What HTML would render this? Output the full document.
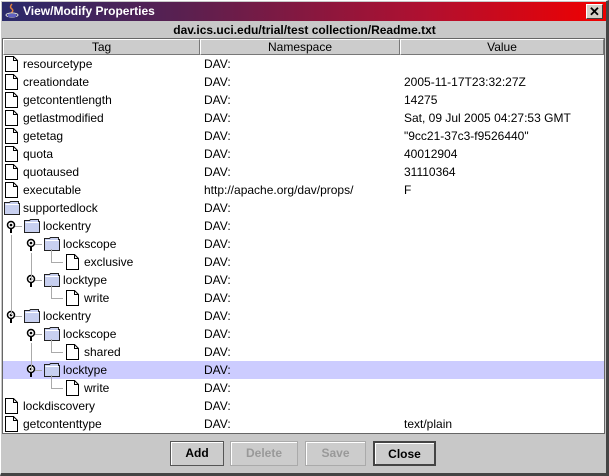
<!DOCTYPE html>
<html><head><style>
*{margin:0;padding:0;box-sizing:border-box}
body{width:609px;height:476px;background:#c8c8c8;position:relative;overflow:hidden;font-family:"Liberation Sans",sans-serif;font-size:12px;color:#000}
.a{position:absolute}
.t{position:absolute;white-space:nowrap;line-height:18px}
.btn{position:absolute;top:441px;height:25px;border:1px solid #555;background:#cccccc;font-weight:bold;font-size:12px;text-align:center;line-height:22px;box-shadow:inset 1px 1px 0 #fff}
.dis{color:#999;border-color:#aaa}
</style></head><body>
<div class="a" style="left:0;top:0;width:609px;height:476px;border-right:3px solid #444;border-bottom:3px solid #444;border-left:1px solid #fff;border-top:1px solid #fff"></div>
<div class="a" style="left:2px;top:2px;width:604px;height:19px;background:linear-gradient(90deg,#2a2a6a 0%,#5a2050 30%,#b01030 70%,#f00000 100%)"></div>
<svg class="a" style="left:5px;top:3px" width="14" height="16"><path d="M7 1 Q4 4 7 6 Q9 8 6 10" stroke="#e08040" fill="none" stroke-width="1.5"/><ellipse cx="7" cy="12" rx="6" ry="2" fill="none" stroke="#ddd"/><rect x="3" y="11" width="8" height="3" fill="#6060c0"/></svg>
<div class="t" style="left:23px;top:2px;color:#fff;font-weight:bold;font-size:12px;line-height:19px">View/Modify Properties</div>
<div class="a" style="left:586px;top:4px;width:17px;height:15px;background:#d4d0c8;border:1px solid #fff;border-right-color:#404040;border-bottom-color:#404040;text-align:center;font-size:13px;font-weight:bold;line-height:13px">✕</div>
<div class="t" style="left:0;width:609px;top:21px;text-align:center;font-weight:bold;font-size:12px;line-height:18px">dav.ics.uci.edu/trial/test collection/Readme.txt</div>
<div class="a" style="left:2px;top:38px;width:603px;height:396px;background:#fff;border:1px solid #666"></div>
<div class="a" style="left:3px;top:39px;width:197px;height:16px;background:#cccccc;border:1px solid #fff;border-right-color:#777;border-bottom-color:#777;text-align:center;line-height:14px">Tag</div>
<div class="a" style="left:200px;top:39px;width:200px;height:16px;background:#cccccc;border:1px solid #fff;border-right-color:#777;border-bottom-color:#777;text-align:center;line-height:14px">Namespace</div>
<div class="a" style="left:400px;top:39px;width:204px;height:16px;background:#cccccc;border:1px solid #fff;border-right-color:#777;border-bottom-color:#777;text-align:center;line-height:14px">Value</div>
<div class="a" style="left:3px;top:361px;width:601px;height:18px;background:#ccccff"></div>
<svg class="a" style="left:0;top:0" width="609" height="476" id="ic"></svg>
<div id="rows"></div>
<div class="btn" style="left:170px;width:54px">Add</div>
<div class="btn dis" style="left:230px;width:68px">Delete</div>
<div class="btn dis" style="left:305px;width:61px">Save</div>
<div class="btn" style="left:373px;width:63px;border:2px solid #444">Close</div>
<script>
var R=[["resourcetype",0,"f","DAV:",""],["creationdate",0,"f","DAV:","2005-11-17T23:32:27Z"],["getcontentlength",0,"f","DAV:","14275"],["getlastmodified",0,"f","DAV:","Sat, 09 Jul 2005 04:27:53 GMT"],["getetag",0,"f","DAV:","\"9cc21-37c3-f9526440\""],["quota",0,"f","DAV:","40012904"],["quotaused",0,"f","DAV:","31110364"],["executable",0,"f","http://apache.org/dav/props/","F"],["supportedlock",0,"d","DAV:",""],["lockentry",1,"d","DAV:",""],["lockscope",2,"d","DAV:",""],["exclusive",3,"f","DAV:",""],["locktype",2,"d","DAV:",""],["write",3,"f","DAV:",""],["lockentry",1,"d","DAV:",""],["lockscope",2,"d","DAV:",""],["shared",3,"f","DAV:",""],["locktype",2,"d","DAV:",""],["write",3,"f","DAV:",""],["lockdiscovery",0,"f","DAV:",""],["getcontenttype",0,"f","DAV:","text/plain"]];
var h="",s="";
var ix=[4,24,44,65];
R.forEach(function(r,i){var y=55+18*i,l=r[1],x=ix[l];
h+='<div class="t" style="left:'+(x+19)+'px;top:'+y+'px">'+r[0]+'</div><div class="t" style="left:204px;top:'+y+'px">'+r[3]+'</div><div class="t" style="left:404px;top:'+y+'px">'+r[4]+'</div>';
if(r[2]=="f"){s+='<path d="M'+(x+1.5)+' '+(y+1.5)+'h8l4 4v11h-12z" fill="#fff" stroke="#000"/><path d="M'+(x+9.5)+' '+(y+1.5)+'v4h4" fill="none" stroke="#000"/>';}
else{s+='<path d="M'+(x+0.5)+' '+(y+3.5)+'h5l1 -1h8v2h1v11h-15z" fill="#c8d0f0" stroke="#222"/><path d="M'+(x+1.5)+' '+(y+5.5)+'h13" stroke="#fff"/>';}
if(l==1||l==2){var cx=l==1?11:31;s+='<line x1="'+cx+'" y1="'+(y+9)+'" x2="'+cx+'" y2="'+(y+16)+'" stroke="#000" stroke-width="2"/><circle cx="'+cx+'" cy="'+(y+8)+'" r="3.5" fill="#fff" stroke="#000" stroke-width="1.5"/><circle cx="'+cx+'" cy="'+(y+8)+'" r="1.3" fill="#000"/><line x1="'+(cx+4)+'" y1="'+(y+9.5)+'" x2="'+(cx+11)+'" y2="'+(y+9.5)+'" stroke="#aaa"/>';}
if(l==3){s+='<path d="M51.5 '+(y-4)+'V'+(y+9.5)+'H63" fill="none" stroke="#aaa"/>';}
});
s+='<line x1="11.5" y1="235" x2="11.5" y2="315" stroke="#aaa"/><line x1="31.5" y1="253" x2="31.5" y2="280" stroke="#aaa"/><line x1="31.5" y1="343" x2="31.5" y2="370" stroke="#aaa"/>';
document.getElementById("rows").innerHTML=h;document.getElementById("ic").innerHTML=s;
</script>
</body></html>
